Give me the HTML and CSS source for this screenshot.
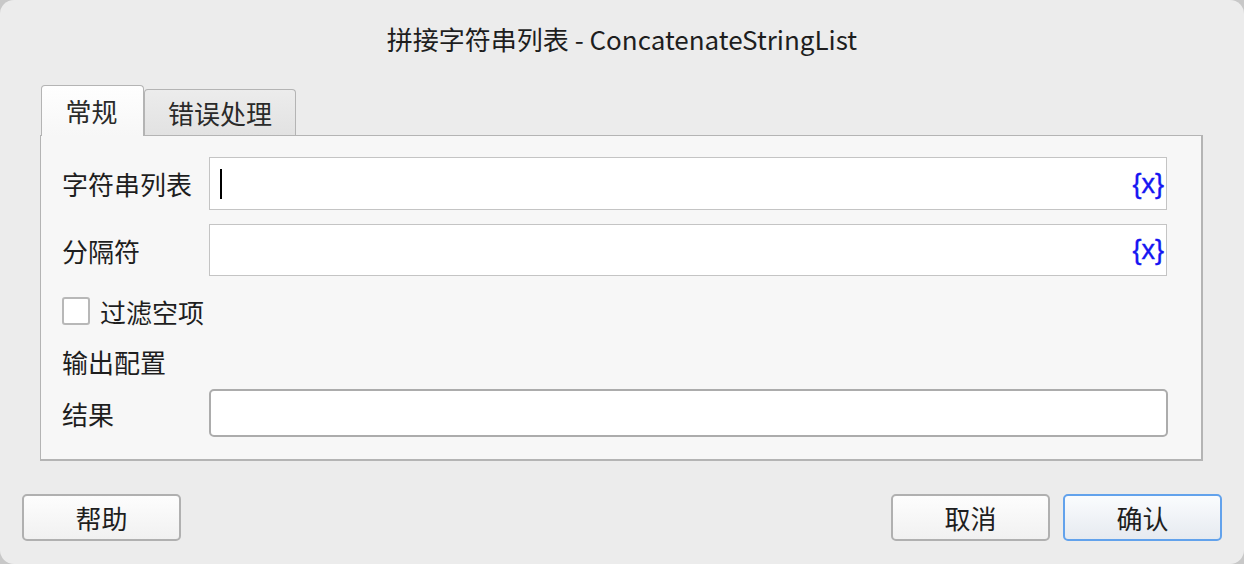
FILE: index.html
```html
<!DOCTYPE html>
<html lang="zh">
<head>
<meta charset="utf-8">
<link rel="stylesheet" href="styles.css">
</head>
<body>
<div class="window">
  <div class="title">拼接字符串列表 - ConcatenateStringList</div>
  <div class="tabs">
    <div class="tab active">常规</div>
    <div class="tab">错误处理</div>
  </div>
  <div class="panel">
    <div class="row r1">
      <div class="label">字符串列表</div>
      <div class="input var"><span class="caret"></span><span class="vx">{x}</span></div>
    </div>
    <div class="row r2">
      <div class="label">分隔符</div>
      <div class="input var"><span class="vx">{x}</span></div>
    </div>
    <div class="check-row">
      <span class="checkbox"></span>
      <span class="check-label">过滤空项</span>
    </div>
    <div class="section">输出配置</div>
    <div class="row r3">
      <div class="label">结果</div>
      <div class="input result"></div>
    </div>
  </div>
  <div class="footer">
    <div class="btn">帮助</div>
    <div class="spacer"></div>
    <div class="btn">取消</div>
    <div class="btn primary">确认</div>
  </div>
</div>
</body>
</html>
```
FILE: styles.css
```css
html, body {
  margin: 0;
  padding: 0;
  background: #c8c8c8;
}
body {
  width: 1244px;
  height: 564px;
  overflow: hidden;
  font-family: "Noto Sans CJK SC", "Noto Sans", sans-serif;
  color: #222;
}
.window {
  width: 1244px;
  height: 564px;
  box-sizing: border-box;
  background: #ececec;
  border-radius: 14px;
  display: flex;
  flex-direction: column;
}
.title {
  height: 30px;
  margin-top: 24px;
  line-height: 30px;
  font-size: 26px;
  text-align: center;
  color: #1e1e1e;
}
.tabs {
  margin-top: 31px;
  margin-left: 41px;
  display: flex;
  align-items: flex-end;
  height: 50px;
  position: relative;
  z-index: 1;
}
.tab {
  box-sizing: border-box;
  height: 46px;
  width: 152px;
  border: 1px solid #b4b4b4;
  border-bottom: none;
  border-radius: 4px 4px 0 0;
  background: linear-gradient(#ececec, #e2e2e2);
  font-size: 26px;
  line-height: 46px;
  text-align: center;
  color: #2a2a2a;
}
.tab.active {
  width: 103px;
  height: 51px;
  background: linear-gradient(#fefefe, #f7f7f7);
  line-height: 50px;
  margin-bottom: -1px;
  padding-right: 2px;
}
.panel {
  margin: 0 41px 0 40px;
  height: 326px;
  box-sizing: border-box;
  border: 1px solid #b4b4b4;
  border-right-width: 2px;
  border-bottom-width: 2px;
  background: #f7f7f7;
  padding: 21px 34px 0 21px;
  display: flex;
  flex-direction: column;
}
.row {
  display: flex;
  align-items: center;
}
.label {
  width: 147px;
  font-size: 26px;
  color: #1e1e1e;
}
.input {
  flex: 1;
  box-sizing: border-box;
  background: #fff;
  border: 1px solid #c4c4c4;
  display: flex;
  align-items: center;
}
.var {
  height: 53px;
  padding: 0 2px 0 10px;
}
.r2 {
  margin-top: 14px;
}
.r2 .var {
  height: 52px;
}
.caret {
  width: 2px;
  height: 30px;
  background: #000;
}
.vx {
  margin-left: auto;
  color: #1515f2;
  font-family: "Liberation Sans", sans-serif;
  font-size: 27px;
  line-height: 30px;
  -webkit-text-stroke: 0.4px #1515f2;
}
.check-row {
  margin-top: 21px;
  display: flex;
  align-items: center;
  height: 28px;
}
.checkbox {
  width: 24px;
  height: 24px;
  border: 2px solid #b8b8b8;
  border-radius: 3px;
  background: #fff;
}
.check-label {
  margin-left: 10px;
  font-size: 26px;
  color: #1e1e1e;
}
.section {
  margin-top: 20px;
  font-size: 26px;
  line-height: 34px;
  color: #1e1e1e;
}
.r3 {
  margin-top: 10px;
}
.result {
  height: 48px;
  border: 2px solid #acacac;
  border-radius: 5px;
  margin-right: -1px;
}
.footer {
  margin-top: 33px;
  padding: 0 22px;
  display: flex;
  gap: 13px;
}
.spacer {
  flex: 1;
}
.btn {
  box-sizing: border-box;
  width: 159px;
  height: 47px;
  border: 2px solid #b0b0b0;
  border-radius: 5px;
  background: linear-gradient(#fdfdfd, #f1f1f1);
  font-size: 26px;
  line-height: 43px;
  text-align: center;
  color: #1e1e1e;
}
.btn.primary {
  border-color: #62a2ec;
  background: linear-gradient(#fafcfe, #e6eaf0);
}
```
